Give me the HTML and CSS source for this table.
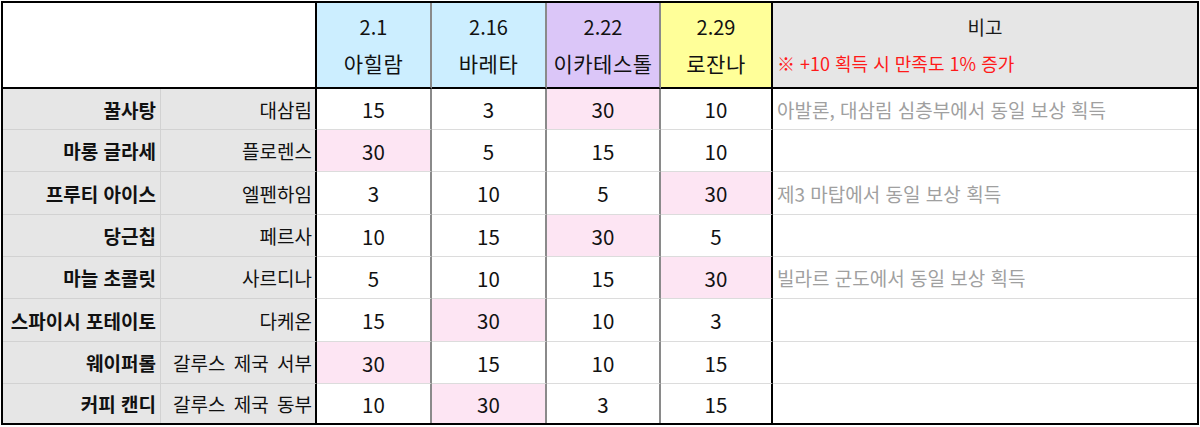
FILE: index.html
```html
<!DOCTYPE html>
<html lang="ko">
<head>
<meta charset="utf-8">
<link rel="stylesheet" href="styles.css">
</head>
<body>
<div class="sheet">
  <div class="cell corner"></div>
  <div class="cell hd blue"><span class="date">2.1</span><span class="boss">아힐람</span></div>
  <div class="cell hd blue"><span class="date">2.16</span><span class="boss">바레타</span></div>
  <div class="cell hd purple"><span class="date">2.22</span><span class="boss">이카테스톨</span></div>
  <div class="cell hd yellow last"><span class="date">2.29</span><span class="boss">로잔나</span></div>
  <div class="cell hd note-hd"><span class="title">비고</span><span class="warn">※ +10 획득 시 만족도 1% 증가</span></div>

  <div class="cell name">꿀사탕</div><div class="cell place">대삼림</div>
  <div class="cell num">15</div><div class="cell num">3</div><div class="cell num pink">30</div><div class="cell num last">10</div>
  <div class="cell note">아발론, 대삼림 심층부에서 동일 보상 획득</div>

  <div class="cell name">마롱 글라세</div><div class="cell place">플로렌스</div>
  <div class="cell num pink">30</div><div class="cell num">5</div><div class="cell num">15</div><div class="cell num last">10</div>
  <div class="cell note"></div>

  <div class="cell name">프루티 아이스</div><div class="cell place">엘펜하임</div>
  <div class="cell num">3</div><div class="cell num">10</div><div class="cell num">5</div><div class="cell num last pink">30</div>
  <div class="cell note">제3 마탑에서 동일 보상 획득</div>

  <div class="cell name">당근칩</div><div class="cell place">페르사</div>
  <div class="cell num">10</div><div class="cell num">15</div><div class="cell num pink">30</div><div class="cell num last">5</div>
  <div class="cell note"></div>

  <div class="cell name">마늘 초콜릿</div><div class="cell place">사르디나</div>
  <div class="cell num">5</div><div class="cell num">10</div><div class="cell num">15</div><div class="cell num last pink">30</div>
  <div class="cell note">빌라르 군도에서 동일 보상 획득</div>

  <div class="cell name">스파이시 포테이토</div><div class="cell place">다케온</div>
  <div class="cell num">15</div><div class="cell num pink">30</div><div class="cell num">10</div><div class="cell num last">3</div>
  <div class="cell note"></div>

  <div class="cell name">웨이퍼롤</div><div class="cell place">갈루스 제국 서부</div>
  <div class="cell num pink">30</div><div class="cell num">15</div><div class="cell num">10</div><div class="cell num last">15</div>
  <div class="cell note"></div>

  <div class="cell name bottom">커피 캔디</div><div class="cell place bottom">갈루스 제국 동부</div>
  <div class="cell num bottom">10</div><div class="cell num bottom pink">30</div><div class="cell num bottom">3</div><div class="cell num last bottom">15</div>
  <div class="cell note bottom"></div>
</div>
</body>
</html>
```

FILE: styles.css
```css
html, body {
  margin: 0;
  padding: 0;
  background: #ffffff;
}

body {
  font-family: "Noto Sans CJK KR", "Noto Sans", sans-serif;
  color: #111111;
}

.sheet {
  margin: 1px 0 0 1px;
  width: 1194px;
  border: 2px solid #000000;
  display: grid;
  grid-template-columns: 158px 156px 115px 115px 114px 112px 424px;
  grid-template-rows: 86px 41px 42px 43px 42px 42px 43px 42px 39px;
  background: #ffffff;
}

.cell {
  box-sizing: border-box;
  display: flex;
  align-items: center;
  border-bottom: 1px solid #dcdcdc;
  white-space: nowrap;
  overflow: hidden;
}

.cell.bottom {
  border-bottom: none;
}

.corner {
  grid-column: 1 / 3;
  background: #ffffff;
  border-right: 2px solid #000000;
  border-bottom: 2px solid #000000;
}

.hd {
  flex-direction: column;
  justify-content: center;
  align-items: center;
  border-bottom: 2px solid #000000;
  border-right: 2px solid #8a8a8a;
  line-height: 37px;
}

.hd .date {
  font-size: 20px;
}

.hd .boss {
  font-size: 21px;
  letter-spacing: 0.5px;
}

.hd.last {
  border-right: 2px solid #000000;
}

.blue { background: #cceeff; }
.purple { background: #dbc6f8; }
.yellow { background: #ffff99; }

.note-hd {
  background: #e6e6e6;
  border-right: none;
  align-items: stretch;
}

.note-hd .title {
  text-align: center;
  font-size: 19px;
  color: #1a1a1a;
}

.note-hd .warn {
  color: #ff1a1a;
  font-size: 18px;
  padding-left: 4px;
}

.name {
  background: #e6e6e6;
  justify-content: flex-end;
  padding-right: 4px;
  font-size: 19px;
  font-weight: bold;
  border-right: 1px solid #d2d2d2;
  border-bottom-color: #d2d2d2;
}

.place {
  background: #e6e6e6;
  justify-content: flex-end;
  padding-right: 3px;
  font-size: 19px;
  word-spacing: 3px;
  border-right: 2px solid #000000;
  border-bottom-color: #d2d2d2;
}

.num {
  justify-content: center;
  font-size: 20.5px;
  border-right: 2px solid #8a8a8a;
}

.num.last {
  border-right: 2px solid #000000;
}

.pink {
  background: #fde5f3;
}

.note {
  padding-left: 4px;
  font-size: 19px;
  color: #a0a0a0;
}
```
